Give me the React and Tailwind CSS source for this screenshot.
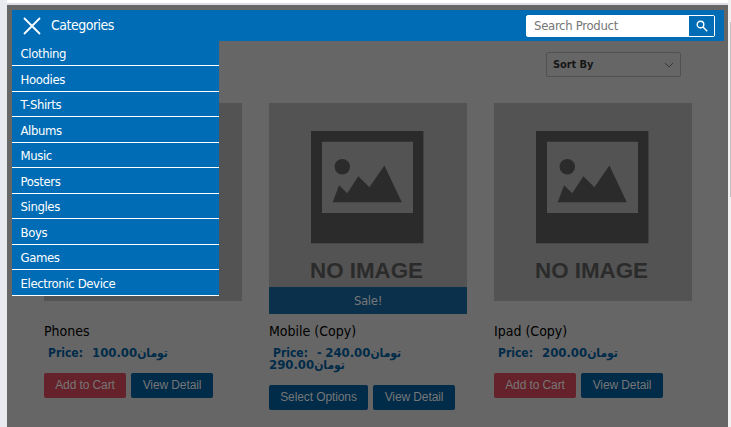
import React from "react";

const categories = [
  "Clothing",
  "Hoodies",
  "T-Shirts",
  "Albums",
  "Music",
  "Posters",
  "Singles",
  "Boys",
  "Games",
  "Electronic Device",
];

const products = [
  { name: "Phones", prices: ["100.00"], action: "Add to Cart" },
  { name: "Mobile (Copy)", prices: ["240.00", "290.00"], action: "Select Options", sale: true },
  { name: "Ipad (Copy)", prices: ["200.00"], action: "Add to Cart" },
];

function NoImage() {
  return (
    <svg viewBox="0 0 198 198" className="block h-[198px] w-[198px] bg-[#535353]">
      <path fill="#2b2b2b" fillRule="evenodd" d="M42 28H154.4V140.2H42ZM53 38.7V110H144V38.7Z" />
      <circle cx="73.3" cy="63.7" r="7.7" fill="#2b2b2b" />
      <path fill="#2b2b2b" d="M63.7 99.2L70.1 82.2L78.3 90.3L89.3 73.3L100.4 84.3L115.4 62.6L132.8 99.2Z" />
      <text x="41" y="175" textLength="113" fontSize="22.4" fontWeight="700" fill="#2b2b2b" className="font-['Liberation_Sans',sans-serif]">
        NO IMAGE
      </text>
    </svg>
  );
}

function Button({ children, color, width }) {
  return (
    <button className={`h-[25px] rounded-[2px] font-['Liberation_Sans',sans-serif] text-[12px] leading-[25px] tracking-[-0.1px] text-[#777] ${color} ${width}`}>
      {children}
    </button>
  );
}

function Price({ amount }) {
  return (
    <bdi dir="ltr">
      <span className="text-[13px]">{amount}</span>
      <span>تومان</span>
    </bdi>
  );
}

function Product({ name, prices, action, sale }) {
  const isCart = action === "Add to Cart";
  return (
    <article className="w-[198px]">
      <div className="relative">
        <NoImage />
        {sale && (
          <div className="absolute top-[184px] left-0 h-[27px] w-full bg-[#0a304b] text-center text-[13px] leading-[27px] tracking-[-0.3px] text-[#777]">
            Sale!
          </div>
        )}
      </div>
      <h2 className="mt-[20px] h-5 text-[14px] leading-5 whitespace-nowrap text-black">{name}</h2>
      <div className="mt-[6px] text-[12px] leading-[12px] font-bold whitespace-nowrap text-[#002b49]">
        <div className="flex h-[12px] pl-1">
          <span className="w-[44px]">Price:</span>
          <span>{sale ? "- " : ""}<Price amount={prices[0]} /></span>
        </div>
        {prices[1] && <div className="h-[12px]"><Price amount={prices[1]} /></div>}
      </div>
      <div className="mt-[14px] flex gap-[5px]">
        <Button color={isCart ? "bg-[#66222a]" : "bg-[#002b49]"} width={isCart ? "w-[82px]" : "w-[99px]"}>
          {action}
        </Button>
        <Button color="bg-[#002b49]" width="w-[82px]">View Detail</Button>
      </div>
    </article>
  );
}

export default function App() {
  return (
    <div className="flex h-[427px] w-[731px] overflow-hidden bg-[#e9eaef] pl-[7px] font-['DejaVu_Sans_Condensed','DejaVu_Sans',sans-serif] [font-stretch:condensed]">
      <div className="flex w-[721px] flex-col">
        <div className="h-[3px] shrink-0 bg-white" />
        <div className="h-[2px] shrink-0 bg-[#dcdde1]" />
        <main className="h-[422px] bg-[#666] px-[5px] pt-[5px]">
          <header className="relative flex h-[31px] w-[712px] items-center bg-[#006cb5] pr-[9px] pl-[11px]">
            <svg viewBox="0 0 18 18" className="h-[18px] w-[18px]" fill="none" stroke="white" strokeWidth="1.8">
              <path d="M1 1L17 17M17 1L1 17" />
            </svg>
            <span className="ml-[10px] pb-[2px] text-[14px] leading-5 tracking-[-0.5px] text-white">Categories</span>
            <div className="ml-auto flex h-[22px] w-[189px] rounded-[2px] border border-white bg-white">
              <span className="flex-1 pl-[7px] text-[13px] leading-[19px] tracking-[-0.3px] text-[#757575]">Search Product</span>
              <span className="flex w-[25px] items-center justify-center bg-[#006cb5]">
                <svg viewBox="0 0 12 12" className="h-3 w-3" fill="none" stroke="white" strokeWidth="1.4">
                  <circle cx="4.5" cy="4.5" r="3.3" />
                  <path d="M7 7L11.2 11.2" />
                </svg>
              </span>
            </div>
            <nav className="absolute top-[31px] left-0 z-10 w-[207px] bg-[#006cb5]">
              {categories.map((name, i) => (
                <div
                  key={name}
                  className={`border-b border-white pl-[8.5px] text-[13px] leading-[24px] tracking-[-0.38px] whitespace-nowrap text-white ${i % 2 ? "h-[26px] pt-[2px]" : "h-[25px] pt-px"}`}
                >
                  {name}
                </div>
              ))}
            </nav>
          </header>
          <div className="mt-[11px] mr-[42px] ml-auto flex h-[25px] w-[135px] items-center justify-between rounded-[2px] border border-[#515151] pr-[6px] pl-[6px]">
            <span className="pt-[2px] text-[11px] font-bold tracking-[-0.1px] text-[#161616]">Sort By</span>
            <svg viewBox="0 0 10 6" className="h-[6px] w-[10px]" fill="none" stroke="#333" strokeWidth="0.9">
              <path d="M1 1L5 5L9 1" />
            </svg>
          </div>
          <section className="mt-[26px] ml-[32px] flex gap-[27px]">
            {products.map((p) => (
              <Product key={p.name} {...p} />
            ))}
          </section>
        </main>
      </div>
      <div className="flex w-[3px] flex-col items-end bg-[#f1f1f1] pt-[22px]">
        <div className="h-[175px] w-px bg-[#c1c1c1]" />
      </div>
    </div>
  );
}
